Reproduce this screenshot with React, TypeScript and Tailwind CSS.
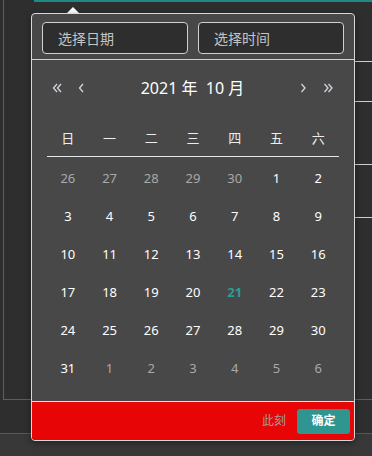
import React from "react";

const weeks = ["日", "一", "二", "三", "四", "五", "六"];

type Day = { n: number; cur: boolean; today?: boolean };

function buildDays(): Day[] {
  const days: Day[] = [];
  for (let n = 26; n <= 30; n++) days.push({ n, cur: false });
  for (let n = 1; n <= 31; n++) days.push({ n, cur: true, today: n === 21 });
  for (let n = 1; n <= 6; n++) days.push({ n, cur: false });
  return days;
}

function Chevron({ dir, double }: { dir: "left" | "right"; double?: boolean }) {
  const single = dir === "left" ? "M5 1 L1.5 5 L5 9" : "M1.5 1 L5 5 L1.5 9";
  const second = dir === "left" ? "M9 1 L5.5 5 L9 9" : "M5.5 1 L9 5 L5.5 9";
  return (
    <svg width={double ? 11 : 7} height="10" viewBox={double ? "0 0 11 10" : "0 0 7 10"} fill="none" stroke="#d2d6de" strokeWidth="1.3">
      <path d={single} />
      {double && <path d={second} />}
    </svg>
  );
}

export default function App() {
  const days = buildDays();
  const rows = [0, 1, 2, 3, 4, 5].map((r) => days.slice(r * 7, r * 7 + 7));

  return (
    <div
      className="relative w-[372px] h-[456px] overflow-hidden bg-[#383838]"
      style={{ fontFamily: '"Noto Sans", "Noto Sans CJK SC", sans-serif' }}
    >
      {/* page behind the picker */}
      <div className="h-[434px] bg-[#2e2e2e] border-b border-[#1d6f6c]">
        <div className="ml-[3px] h-[400px] border-l border-b border-[#5e5e5e]">
          <div className="ml-[30px] h-[2px] bg-[#1e8a86]" />
          <div className="ml-[351px] h-[60px] border-b border-[#cfcfcf]" />
          <div className="ml-[351px] h-[40px] border-b border-[#cfcfcf]" />
          <div className="ml-[351px] h-[63px] border-b border-[#cfcfcf]" />
          <div className="ml-[351px] h-[53px] border-b border-[#cfcfcf]" />
        </div>
      </div>

      {/* arrow */}
      <div className="absolute left-[67px] top-[7px] w-0 h-0 border-l-[6px] border-r-[6px] border-b-[6px] border-l-transparent border-r-transparent border-b-white" />

      {/* picker */}
      <div className="absolute left-[31px] top-[13px] w-[324px] h-[428px] flex flex-col rounded-[4px] border border-[#d8d8d8] bg-[#484848] overflow-hidden shadow-[0_2px_6px_rgba(0,0,0,0.4)]">
        <div className="flex gap-[10px] px-[10px] pt-[8px] pb-[5px] border-b border-[#d0d0d0]">
          <div className="w-[146px] h-[32px] flex items-center pl-[15px] rounded-[4px] border border-[#d0d0d0] bg-[#2e2e2e] text-[14px] text-[#c4c4c4]">
            选择日期
          </div>
          <div className="w-[146px] h-[32px] flex items-center pl-[15px] rounded-[4px] border border-[#d0d0d0] bg-[#2e2e2e] text-[14px] text-[#c4c4c4]">
            选择时间
          </div>
        </div>

        <div className="h-[56px] flex items-center px-[20px]">
          <div className="flex items-center gap-[15px]">
            <Chevron dir="left" double />
            <Chevron dir="left" />
          </div>
          <div className="flex-1 text-center text-[16px] text-white">2021 年&nbsp; 10 月</div>
          <div className="flex items-center gap-[16px]">
            <Chevron dir="right" />
            <Chevron dir="right" double />
          </div>
        </div>

        <div className="mx-[15px] w-[292px]">
          <div className="grid grid-cols-7 h-[41px] items-center border-b border-[#e6e6e6] pt-[6px]">
            {weeks.map((w) => (
              <span key={w} className="text-center text-[13px] text-[#ededed]">
                {w}
              </span>
            ))}
          </div>
          <div className="pt-[3px]">
            {rows.map((row, i) => (
              <div key={i} className="grid grid-cols-7 h-[38px] items-center">
                {row.map((d, j) => (
                  <span
                    key={j}
                    className={
                      d.today
                        ? "text-center text-[13px] font-bold text-[#2b9c95]"
                        : d.cur
                        ? "text-center text-[13px] text-white"
                        : "text-center text-[13px] text-[#a9a9a9]"
                    }
                  >
                    {d.n}
                  </span>
                ))}
              </div>
            ))}
          </div>
        </div>

        <div className="mt-auto h-[39px] flex items-center justify-end gap-[11px] pr-[4px] border-t border-[#e0e0e0] bg-[#e80505]">
          <span className="text-[12px] text-[#a89a9a]">此刻</span>
          <div className="w-[53px] h-[25px] flex items-center justify-center rounded-[3px] bg-[#2e9590] text-[12px] font-bold text-white">
            确定
          </div>
        </div>
      </div>
    </div>
  );
}
